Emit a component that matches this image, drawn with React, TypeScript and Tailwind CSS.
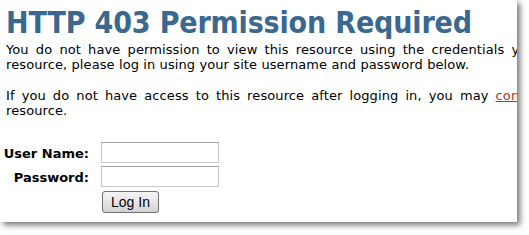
import React from "react";

export default function App() {
  return (
    <div className="w-[529px] h-[235px] bg-white overflow-hidden">
      <div
        className="w-[517px] h-[222px] bg-white overflow-hidden shadow-[3px_3px_6px_rgba(0,0,0,0.55)] text-black"
        style={{ fontFamily: '"DejaVu Sans", Verdana, sans-serif' }}
      >
        <h1
          className="mt-[8px] pl-[6px] text-[30px] leading-[30px] font-bold text-[#3a6890] whitespace-nowrap tracking-[-0.15px] [font-stretch:condensed]"
          style={{ fontFamily: '"DejaVu Sans Condensed", "DejaVu Sans", Verdana, sans-serif' }}
        >
          HTTP 403 Permission Required
        </h1>
        <div className="mt-[4px] pl-[6px] text-[13px] leading-[15px] tracking-[0.1px]">
          <div className="whitespace-nowrap [word-spacing:2.9px]">
            You do not have permission to view this resource using the credentials you supplied. To access this
          </div>
          <div className="whitespace-nowrap">
            resource, please log in using your site username and password below.
          </div>
          <div className="mt-[16px] whitespace-nowrap [word-spacing:2.8px]">
            If you do not have access to this resource after logging in, you may{" "}
            <a href="#" className="text-[#c0301c] underline">contact</a> the site administrator for access to this
          </div>
          <div className="whitespace-nowrap">resource.</div>
        </div>
        <div className="mt-[24px] grid grid-cols-[89px_auto] gap-x-[12px] text-[13px] leading-[15px]">
          <label className="font-bold text-right self-center pt-[2px] whitespace-nowrap">User Name:</label>
          <input className="w-[118px] h-[21px] border border-[#c8c8c8] border-t-[#a3a3a3] bg-white outline-none" />
          <label className="mt-[3px] font-bold text-right self-center pt-[2px] whitespace-nowrap">Password:</label>
          <input type="password" className="mt-[3px] w-[118px] h-[21px] border border-[#c8c8c8] border-t-[#a3a3a3] bg-white outline-none" />
          <div />
          <button
            className="mt-[4px] ml-[1px] w-[57px] h-[22px] rounded-[3px] border border-[#707070] bg-gradient-to-b from-[#f4f4f4] via-[#e6e6e6] to-[#d2d2d2] text-[14px] leading-[20px] text-black"
            style={{ fontFamily: '"Liberation Sans", Arial, sans-serif' }}
          >
            Log In
          </button>
        </div>
      </div>
    </div>
  );
}
